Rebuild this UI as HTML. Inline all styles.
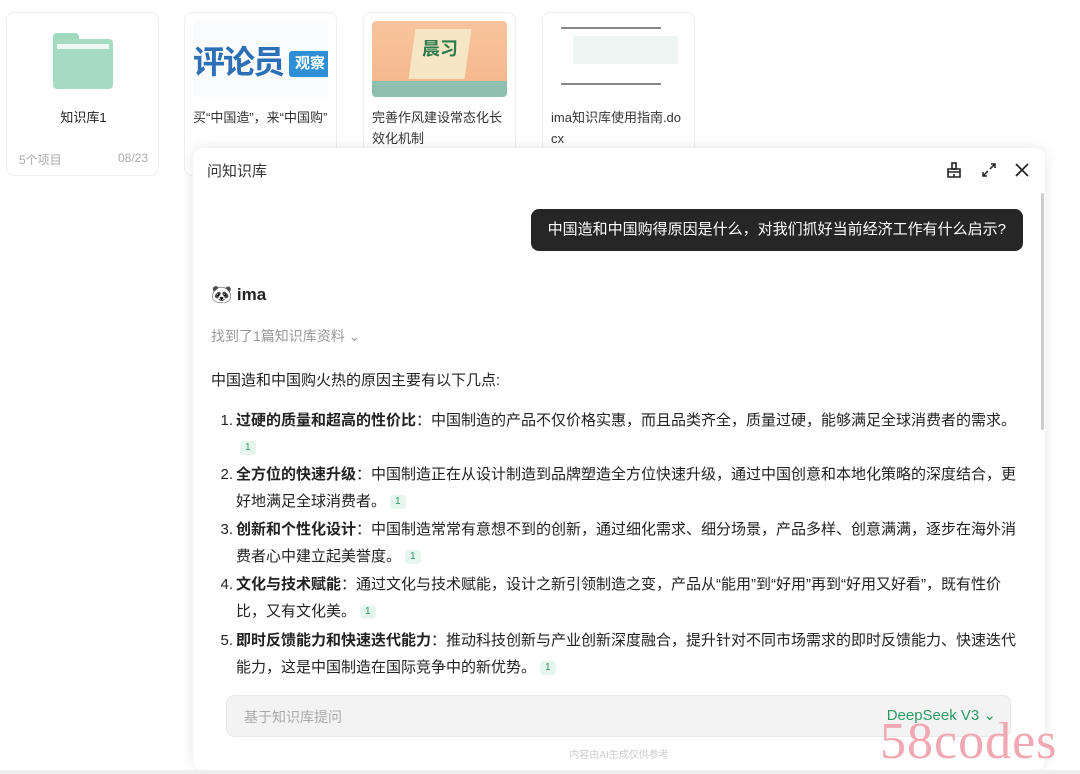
<!DOCTYPE html><html><head><meta charset="utf-8"><style>
*{margin:0;padding:0;box-sizing:border-box}
body{width:1080px;height:774px;overflow:hidden;background:#fff;font-family:"Liberation Sans","Noto Sans CJK SC",sans-serif;color:#222;position:relative}
.card{position:absolute;top:12px;width:153px;height:164px;border:1px solid #eee;border-radius:8px;background:#fff}
.thumb{position:absolute;left:8px;top:8px;width:135px;height:76px;border-radius:4px;overflow:hidden}
.ct{position:absolute;left:8px;top:94px;font-size:13px;line-height:21px;color:#333}
.panel{position:absolute;left:193px;top:148px;width:852px;height:622px;background:#fff;border-radius:10px;box-shadow:0 0 14px rgba(0,0,0,.1)}
.p{position:absolute;font-size:15px;line-height:22px}
.b{display:inline-block;background:#e6f6ee;color:#2c9a63;font-size:10px;line-height:14px;padding:0 5px;border-radius:3px;margin-left:4px;vertical-align:middle}
.n{position:absolute;left:26px;width:14px;text-align:right}
.t{position:absolute;left:43px;width:792px}
</style></head><body>
<div class="card" style="left:6px">
<div style="position:absolute;left:46px;top:20px;width:60px;height:56px">
<div style="position:absolute;left:0;top:0;width:26px;height:10px;background:#9fd9bd;border-radius:4px 4px 0 0"></div>
<div style="position:absolute;left:0;top:6px;width:60px;height:50px;background:#a5dcc1;border-radius:4px"></div>
<div style="position:absolute;left:4px;top:11px;width:52px;height:5px;background:#eef8f3"></div></div>
<div style="position:absolute;left:0;width:153px;top:94px;text-align:center;font-size:13px">知识库1</div>
<div style="position:absolute;left:12px;top:138px;font-size:12px;color:#aaa">5个项目</div>
<div style="position:absolute;right:10px;top:138px;font-size:12px;color:#aaa">08/23</div></div>
<div class="card" style="left:184px"><div class="thumb" style="background:#fafbfd"><div style="position:absolute;left:0;top:16px;font-size:32px;font-weight:bold;color:#2c6fb7;letter-spacing:-2px">评论员</div><div style="position:absolute;left:96px;top:30px;width:42px;height:26px;background:#2f8fd6;color:#fff;font-size:15px;font-weight:bold;text-align:center;line-height:26px;border-radius:3px">观察</div></div><div class="ct">买“中国造”，来“中国购”</div></div>
<div class="card" style="left:363px"><div class="thumb" style="background:linear-gradient(#f7c49e,#f6b58a)"><div style="position:absolute;left:40px;top:8px;width:56px;height:50px;background:#f6e6c3;transform:skew(-8deg)"></div><div style="position:absolute;left:50px;top:14px;font-size:18px;color:#2e7a4e;font-weight:bold">晨习</div><div style="position:absolute;left:0;bottom:0;width:135px;height:16px;background:#8fbfae"></div></div><div class="ct">完善作风建设常态化长<br>效化机制</div></div>
<div class="card" style="left:542px"><div class="thumb" style="background:#fff"><div style="position:absolute;left:22px;top:15px;width:105px;height:28px;background:#eef5f2"></div><div style="position:absolute;left:10px;top:6px;width:100px;height:2px;background:#888"></div><div style="position:absolute;left:10px;top:62px;width:100px;height:2px;background:#888"></div></div><div class="ct">ima知识库使用指南.do<br>cx</div></div>
<div class="panel">
<div style="position:absolute;left:14px;top:12px;font-size:15px;color:#333">问知识库</div>
<svg style="position:absolute;left:752px;top:13px" width="18" height="18" viewBox="0 0 18 18" fill="none" stroke="#222" stroke-width="1.6"><rect x="7" y="2" width="4" height="6"/><path d="M3 8h12v3H3zM3 11v5h12v-5M9 13v3"/></svg>
<svg style="position:absolute;left:788px;top:14px" width="16" height="16" viewBox="0 0 16 16" fill="none" stroke="#222" stroke-width="1.5"><path d="M10 2h4v4M14 2l-5 5M6 14H2v-4M2 14l5-5"/></svg>
<svg style="position:absolute;left:822px;top:15px" width="14" height="14" viewBox="0 0 14 14" stroke="#222" stroke-width="1.7"><path d="M1 1l12 12M13 1L1 13"/></svg>
<div style="position:absolute;left:848px;top:45px;width:3px;height:237px;background:#ccc;border-radius:2px"></div>
<div style="position:absolute;right:22px;top:61px;height:42px;background:#262626;color:#fff;border-radius:8px;font-size:15px;line-height:42px;padding:0 17px">中国造和中国购得原因是什么，对我们抓好当前经济工作有什么启示?</div>
<div style="position:absolute;left:18px;top:137px;font-size:17px;font-weight:bold">🐼 ima</div>
<div style="position:absolute;left:18px;top:178px;font-size:14px;color:#999">找到了1篇知识库资料 ⌄</div>
<div class="p" style="left:18px;top:222px">中国造和中国购火热的原因主要有以下几点:</div>
<div class="p" style="top:259px;width:852px;line-height:27px"><span class="n">1.</span><div class="t"><b>过硬的质量和超高的性价比</b>：中国制造的产品不仅价格实惠，而且品类齐全，质量过硬，能够满足全球消费者的需求。<br><span class="b">1</span></div></div>
<div class="p" style="top:313px;width:852px;line-height:27px"><span class="n">2.</span><div class="t"><b>全方位的快速升级</b>：中国制造正在从设计制造到品牌塑造全方位快速升级，通过中国创意和本地化策略的深度结合，更好地满足全球消费者。<span class="b">1</span></div></div>
<div class="p" style="top:368px;width:852px;line-height:27px"><span class="n">3.</span><div class="t"><b>创新和个性化设计</b>：中国制造常常有意想不到的创新，通过细化需求、细分场景，产品多样、创意满满，逐步在海外消费者心中建立起美誉度。<span class="b">1</span></div></div>
<div class="p" style="top:423px;width:852px;line-height:27px"><span class="n">4.</span><div class="t"><b>文化与技术赋能</b>：通过文化与技术赋能，设计之新引领制造之变，产品从“能用”到“好用”再到“好用又好看”，既有性价比，又有文化美。<span class="b">1</span></div></div>
<div class="p" style="top:479px;width:852px;line-height:27px"><span class="n">5.</span><div class="t"><b>即时反馈能力和快速迭代能力</b>：推动科技创新与产业创新深度融合，提升针对不同市场需求的即时反馈能力、快速迭代能力，这是中国制造在国际竞争中的新优势。<span class="b">1</span></div></div>
<div style="position:absolute;left:33px;top:547px;width:785px;height:42px;background:#f3f3f3;border:1px solid #e8e8e8;border-radius:8px">
<div style="position:absolute;left:17px;top:11px;font-size:14px;color:#aaa">基于知识库提问</div>
<div style="position:absolute;right:14px;top:10px;font-size:15px;color:#2c9a63">DeepSeek V3 ⌄</div></div>
<div style="position:absolute;left:0;width:852px;top:598px;text-align:center;font-size:10px;color:#ccc">内容由AI生成仅供参考</div>
</div>
<div style="position:absolute;left:0;top:770px;width:1080px;height:4px;background:#eee"></div>
<div style="position:absolute;left:880px;top:712px;font-family:'Liberation Serif',serif;font-size:52px;color:#f2a8b4;letter-spacing:1px">58codes</div>
</body></html>
